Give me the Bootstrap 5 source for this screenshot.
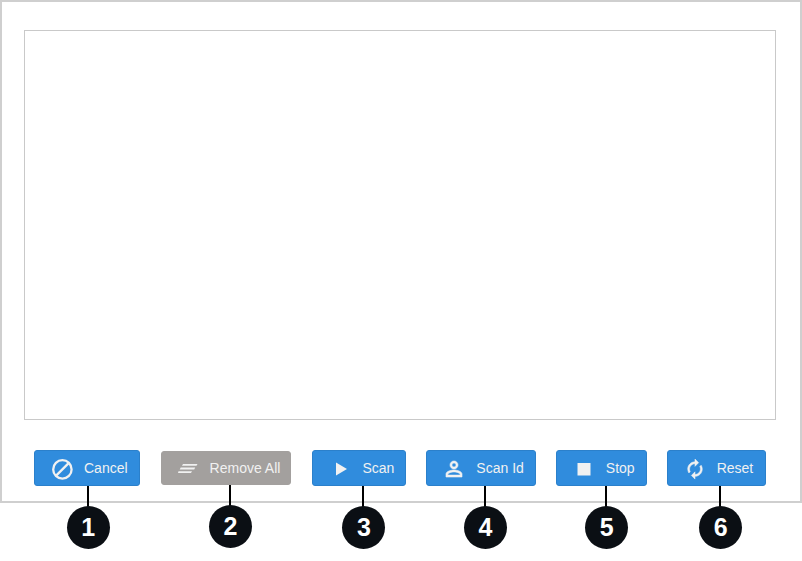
<!DOCTYPE html>
<html lang="en">
<head>
  <meta charset="UTF-8">
  <title>Scan toolbar</title>
  <link rel="stylesheet" href="https://cdn.jsdelivr.net/npm/bootstrap@5.3.0/dist/css/bootstrap.min.css">
  <style>
    body { background: #fff; font-family: "Liberation Sans", Arial, sans-serif; min-height: 561px; }
    .scan-frame { height: 503px; border: 2px solid #cfcfcf; padding: 28px 24px 0 22px; }
    .scan-area { height: 390px; border: 1px solid #c9c9c9; background: #fff; }
    .scan-bar { margin-top: 30px; padding-left: 10px; height: 36px; gap: 20px; }
    .scan-item { position: relative; }
    .scan-btn { height: 36px; font-size: 14px; line-height: 1; color: #f1f1f1; background: #308cdd; border: 1px solid #2b80cb; border-radius: 3px; padding: 0 11px 0 17px; gap: 12px; }
    .scan-btn:disabled { height: 34px; margin: 0 1px; padding: 0 10px 0 16px; color: #f1f1f1; background: #a3a09e; border-color: #a3a09e; opacity: 1; }
    .scan-btn-wide { padding-right: 11px; width: 99px; }
    .scan-icon { width: 20px; height: 20px; flex: none; display: block; overflow: visible; fill: #f1f1f1; }
    .scan-icon-bold { stroke: #f1f1f1; stroke-width: .6; }
    .scan-mark { position: absolute; left: calc(50% + 4px); top: 100%; width: 43px; margin-left: -21px; }
    .scan-mark-first { left: calc(50% + 1px); }
    .scan-mark-late { left: calc(50% + 5px); }
    .scan-mark-line { width: 2px; height: 21px; margin-left: -1px; background: #000; }
    .scan-mark-num { width: 43px; height: 43px; margin-top: -1px; border-radius: 50%; background: #0b0f14; color: #fff; font-size: 25px; font-weight: 700; line-height: 1; }
  </style>
</head>
<body>

<div class="scan-frame">
  <div class="scan-area"></div>

  <div class="scan-bar d-flex align-items-center">
    <div class="scan-item">
      <button type="button" class="scan-btn btn d-flex align-items-center">
        <svg class="scan-icon" viewBox="0 -1.4 20 20"><circle cx="10.4" cy="10" r="9.2" fill="none" stroke="#f1f1f1" stroke-width="2.3"/><path d="M4.4 16 16.4 4" stroke="#f1f1f1" stroke-width="2.3"/></svg>
        <span>Cancel</span>
      </button>
      <div class="scan-mark scan-mark-first d-flex flex-column align-items-center"><div class="scan-mark-line"></div><div class="scan-mark-num d-flex align-items-center justify-content-center">1</div></div>
    </div>
    <div class="scan-item">
      <button type="button" class="scan-btn btn d-flex align-items-center" disabled>
        <svg class="scan-icon" viewBox="0 0 20 20"><path d="M5 6h14.5l-1 1.8H4zM2.7 9.6h14.5l-1 1.8H1.7zM.5 13.2h13.5l-1 1.8H0z"/></svg>
        <span>Remove All</span>
      </button>
      <div class="scan-mark d-flex flex-column align-items-center"><div class="scan-mark-line"></div><div class="scan-mark-num d-flex align-items-center justify-content-center">2</div></div>
    </div>
    <div class="scan-item">
      <button type="button" class="scan-btn btn d-flex align-items-center">
        <svg class="scan-icon" viewBox="0 0 20 20"><path d="M6 4.5 17 11 6 17.5z"/></svg>
        <span>Scan</span>
      </button>
      <div class="scan-mark d-flex flex-column align-items-center"><div class="scan-mark-line"></div><div class="scan-mark-num d-flex align-items-center justify-content-center">3</div></div>
    </div>
    <div class="scan-item">
      <button type="button" class="scan-btn btn d-flex align-items-center">
        <svg class="scan-icon scan-icon-bold" viewBox="2 1 20 20"><path d="M12 5.9a2.1 2.1 0 1 1 0 4.2 2.1 2.1 0 0 1 0-4.2m0 9c2.97 0 6.1 1.46 6.1 2.1v1.1H5.9V17c0-.64 3.13-2.1 6.1-2.1M12 4C9.79 4 8 5.79 8 8s1.79 4 4 4 4-1.79 4-4-1.79-4-4-4zm0 9c-2.67 0-8 1.34-8 4v3h16v-3c0-2.66-5.33-4-8-4z"/></svg>
        <span>Scan Id</span>
      </button>
      <div class="scan-mark d-flex flex-column align-items-center"><div class="scan-mark-line"></div><div class="scan-mark-num d-flex align-items-center justify-content-center">4</div></div>
    </div>
    <div class="scan-item">
      <button type="button" class="scan-btn btn d-flex align-items-center">
        <svg class="scan-icon" viewBox="0 0 20 20"><path d="M3.5 5h13v12.5h-13z"/></svg>
        <span>Stop</span>
      </button>
      <div class="scan-mark scan-mark-late d-flex flex-column align-items-center"><div class="scan-mark-line"></div><div class="scan-mark-num d-flex align-items-center justify-content-center">5</div></div>
    </div>
    <div class="scan-item">
      <button type="button" class="scan-btn scan-btn-wide btn d-flex align-items-center">
        <svg class="scan-icon scan-icon-bold" viewBox="1 -.2 22 22"><path d="M12 6v3l4-4-4-4v3c-4.42 0-8 3.58-8 8 0 1.57.46 3.03 1.24 4.26L6.7 14.8c-.45-.83-.7-1.79-.7-2.8 0-3.31 2.69-6 6-6zm6.76 1.74L17.3 9.2c.44.84.7 1.79.7 2.8 0 3.31-2.69 6-6 6v-3l-4 4 4 4v-3c4.42 0 8-3.58 8-8 0-1.57-.46-3.03-1.24-4.26z"/></svg>
        <span>Reset</span>
      </button>
      <div class="scan-mark d-flex flex-column align-items-center"><div class="scan-mark-line"></div><div class="scan-mark-num d-flex align-items-center justify-content-center">6</div></div>
    </div>
  </div>
</div>

<script src="https://cdn.jsdelivr.net/npm/bootstrap@5.3.0/dist/js/bootstrap.bundle.min.js"></script>
</body>
</html>
